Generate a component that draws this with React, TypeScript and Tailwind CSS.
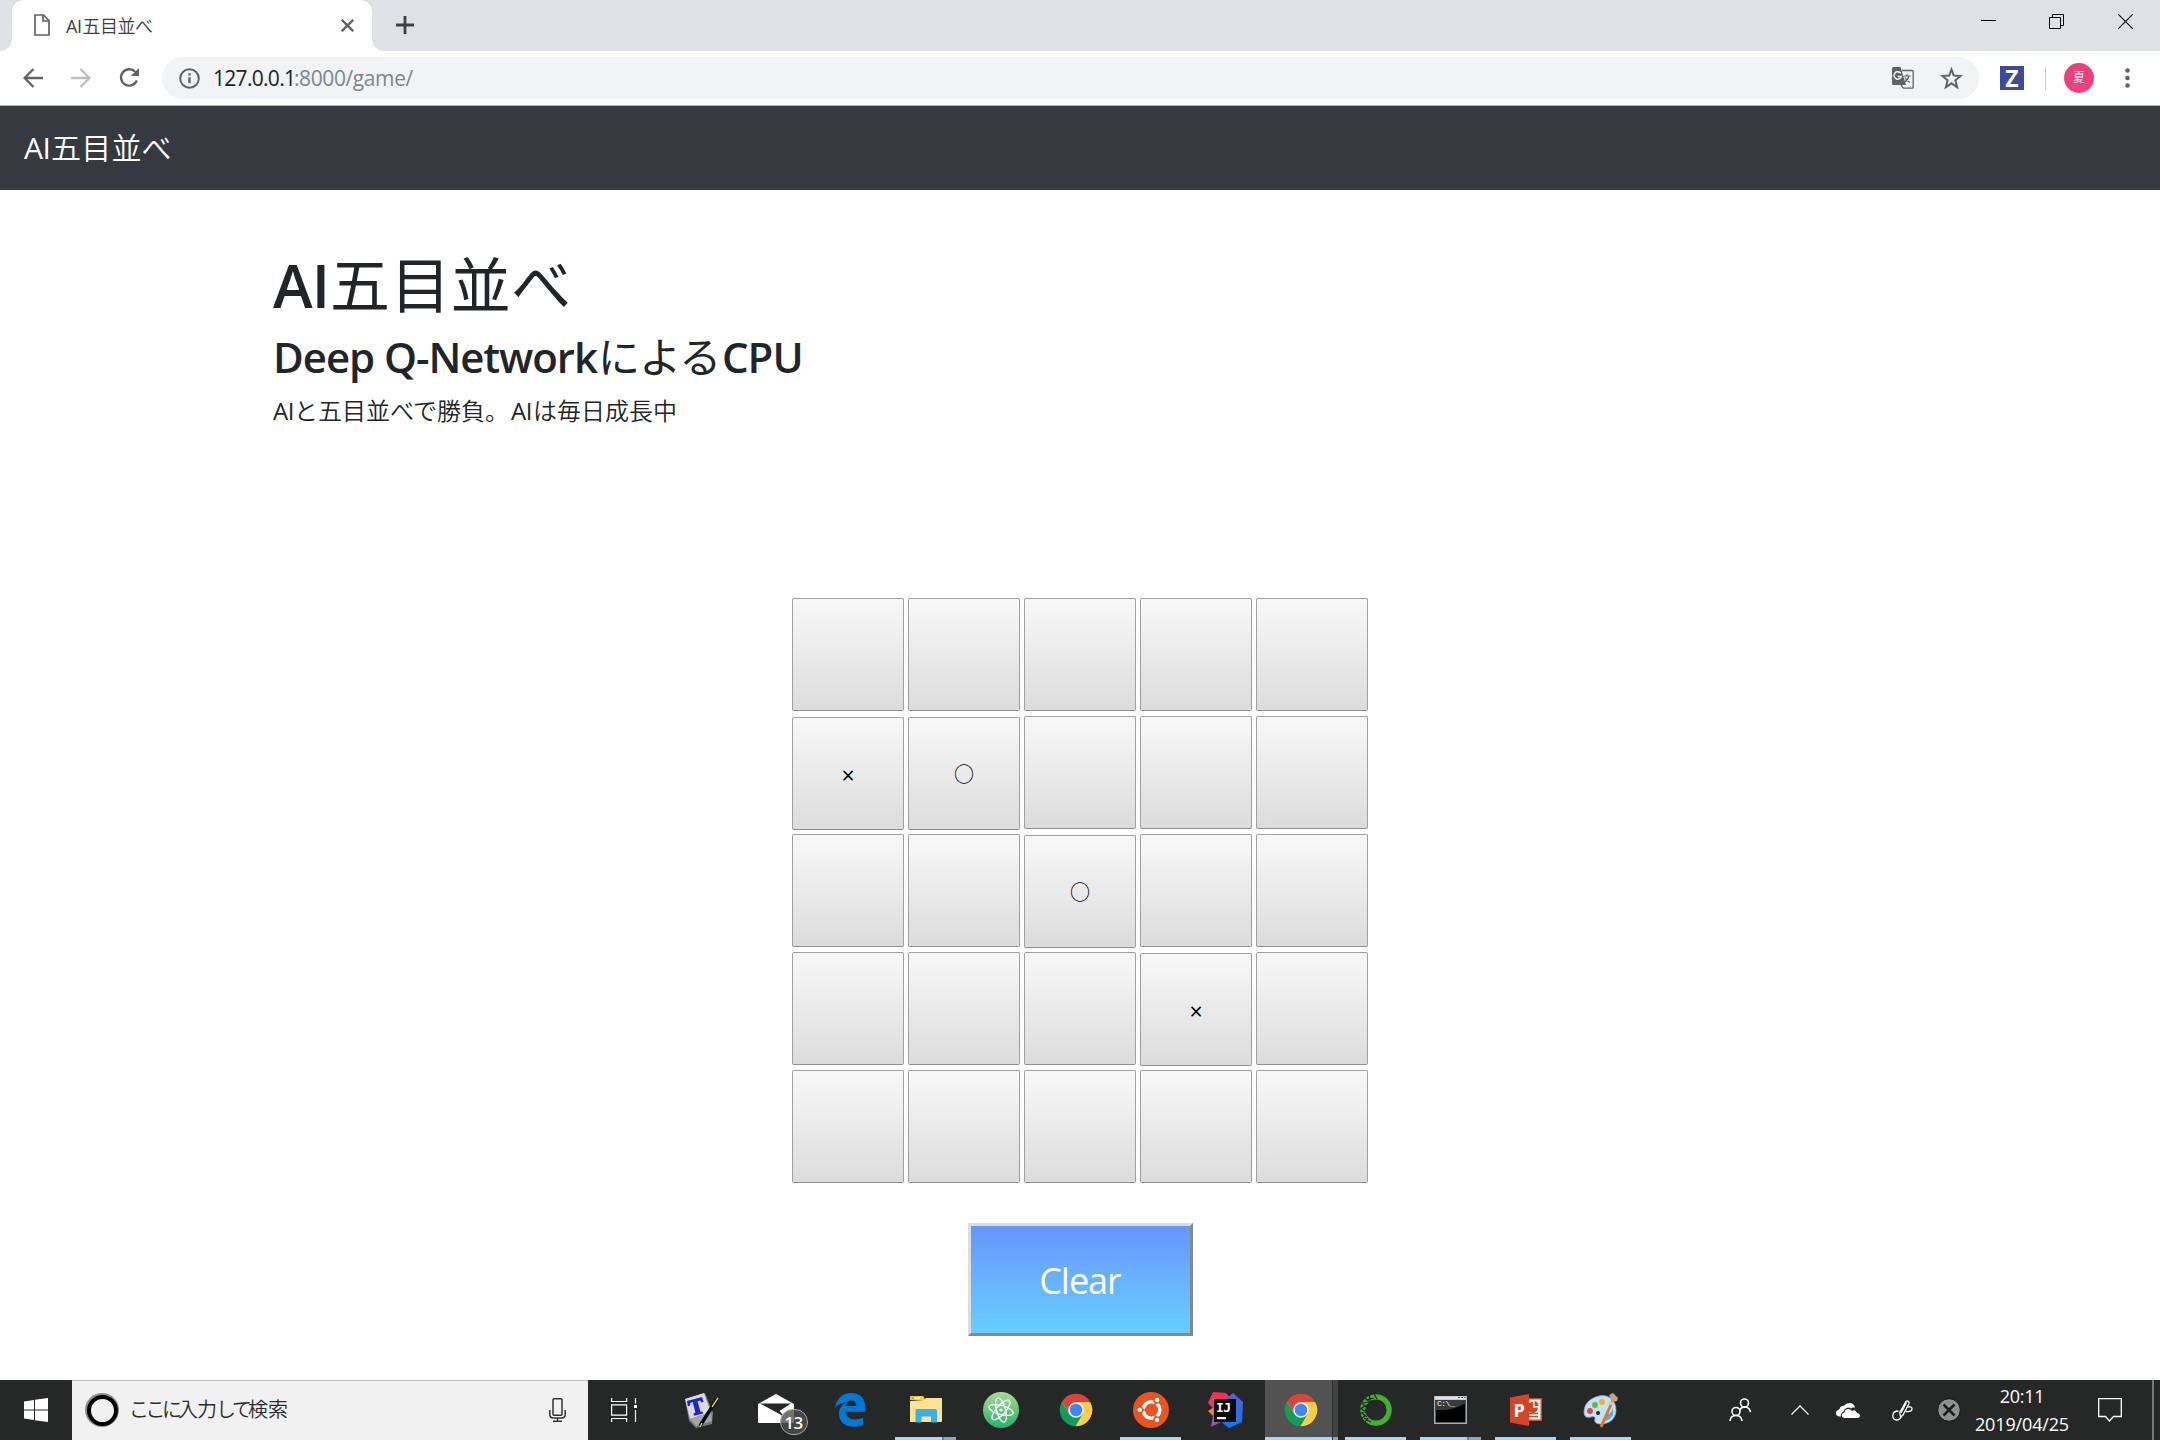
import React from "react";

const ui = "font-['Open_Sans','Noto_Sans_CJK_JP',sans-serif]";

/** A run of text that occupies a fixed advance width. */
function Run({ className, children }: { className: string; children: React.ReactNode }) {
  return <span className={"inline-block shrink-0 whitespace-nowrap " + className}>{children}</span>;
}

function TabStrip() {
  return (
    <div className="flex h-[51px] bg-[#dee1e6]">
      <div className="w-3 bg-white">
        <div className="h-full rounded-br-[12px] bg-[#dee1e6]" />
      </div>
      <div className="flex w-[360px] items-center rounded-t-[12px] bg-white">
        <svg className="ml-[22px] mb-[1px] h-[22px] w-4" viewBox="0 0 16 22" fill="none" stroke="#5f6368" strokeWidth="1.7">
          <path d="M1 1h8.5L15 6.5V21H1zM9 1v6h6" />
        </svg>
        <div className="ml-4 flex h-[26px] items-center text-[18px] leading-[26px] text-[#3c4043]">
          <Run className="w-[16.5px] tracking-[-0.4px]">AI</Run>
          <Run className="font-[350] tracking-[-0.5px] w-[74px]">五目並べ</Run>
        </div>
        <svg className="ml-auto mr-[18px] h-[13px] w-[13px]" viewBox="0 0 13 13" stroke="#5f6368" strokeWidth="2.4">
          <path d="M.8.8l11.4 11.4M12.2.8L.8 12.2" />
        </svg>
      </div>
      <div className="w-3 bg-white">
        <div className="h-full rounded-bl-[12px] bg-[#dee1e6]" />
      </div>
      <svg className="ml-3 mt-4 h-[18px] w-[18px]" viewBox="0 0 18 18" stroke="#3c4043" strokeWidth="2.8">
        <path d="M9 0v18M0 9h18" />
      </svg>
      <div className="ml-auto flex pt-[14px]">
        <svg className="h-[15px] w-[15px]" viewBox="0 0 15 15" stroke="#000" strokeWidth="1">
          <path d="M0 6.5h15" />
        </svg>
        <svg className="ml-[53px] h-[15px] w-[15px]" viewBox="0 0 15 15" fill="none" stroke="#000" strokeWidth="1">
          <path d="M.5 3.5h11v11H.5zM3.5 3.5v-3h11v11h-3" />
        </svg>
        <svg className="ml-[54px] mr-[27px] h-[15px] w-[15px]" viewBox="0 0 15 15" stroke="#000" strokeWidth="1.1">
          <path d="M0 0l15 15M15 0L0 15" />
        </svg>
      </div>
    </div>
  );
}

function Toolbar() {
  return (
    <div className="flex h-[55px] items-center border-b border-[#b3b4b7] bg-white pb-px">
      <svg className="ml-[23px] h-5 w-5" viewBox="0 0 20 20" fill="none" stroke="#5f6368" strokeWidth="2.3">
        <path d="M20 10H2M10.500 1L1.600 10l8.900 9" />
      </svg>
      <svg className="ml-7 h-5 w-5" viewBox="0 0 20 20" fill="none" stroke="#bcbec1" strokeWidth="2.3">
        <path d="M0 10h18M9.500 1l8.900 9-8.900 9" />
      </svg>
      <svg className="ml-7 h-[21px] w-[21px]" viewBox="0 0 22 22" fill="none" stroke="#5f6368" strokeWidth="2.5">
        <path d="M18.700 14.200A8.600 8.600 0 1 1 17 5" />
        <path d="M21 1v8.500h-8.500z" fill="#5f6368" stroke="none" />
      </svg>
      <div className="ml-[22px] mt-px flex h-[42px] w-[1817px] items-center rounded-full bg-[#f1f3f4]">
        <svg className="ml-[17px] h-[21px] w-[21px]" viewBox="0 0 21 21" fill="none" stroke="#5f6368" strokeWidth="2">
          <circle cx="10.500" cy="10.500" r="9.300" />
          <path d="M10.500 9.300v6M10.500 5.200v2.200" strokeWidth="2.400" />
        </svg>
        <div className="ml-[13px] flex text-[21px] leading-[30px]">
          <Run className="w-[81px] tracking-[-0.7px] text-[#202124]">127.0.0.1</Run>
          <Run className="w-[122px] tracking-[-0.4px] text-[#80868b]">:8000/game/</Run>
        </div>
        <svg className="ml-auto h-[22px] w-[22px]" viewBox="0 0 22 22">
          <path d="M10 3.500h10.200q1 0 1 1v15.700q0 1-1 1H11.500L9 18" fill="none" stroke="#5f6368" strokeWidth="1.300" />
          <path d="M1.500 0h7l5.500 18H1.500Q0 18 0 16.500v-15Q0 0 1.500 0z" fill="#5f6368" />
          <path d="M8.700 6.300A3.700 3.700 0 1 0 9.200 9.500H5.800" fill="none" stroke="#fff" strokeWidth="1.500" />
          <path d="M11.500 9h7M15 7v2M17 9q-1 4-5 6.500M13 10.500q1.500 3.500 5 5" fill="none" stroke="#5f6368" strokeWidth="1.200" />
        </svg>
        <svg className="ml-[26px] mr-4 h-[23px] w-[23px]" viewBox="0 0 23 23" fill="none" stroke="#5f6368" strokeWidth="2">
          <path d="M11.500 2.400l2.300 6.100 6.800.5-5.200 4.300 1.700 6.800-5.600-3.800-5.600 3.800 1.700-6.800-5.200-4.300 6.800-.5z" />
        </svg>
      </div>
      <div className="ml-[21px] mt-px flex h-6 w-6 items-center justify-center bg-[#3c4b9b] font-['Noto_Sans',sans-serif] text-[23px] font-bold leading-6 text-white">Z</div>
      <div className="ml-[21px] mt-px h-6 w-px bg-[#cfd1d4]" />
      <div className="ml-[18px] mt-px flex h-[30px] w-[30px] items-center justify-center rounded-full bg-[#ec407a] text-[12px] leading-none text-white">夏</div>
      <svg className="ml-[31px] h-5 w-[5px]" viewBox="0 0 5 20" fill="#5f6368">
        <circle cx="2.500" cy="2.500" r="2.300" />
        <circle cx="2.500" cy="10" r="2.300" />
        <circle cx="2.500" cy="17.500" r="2.300" />
      </svg>
    </div>
  );
}

const board = [
  ["", "", "", "", ""],
  ["×", "○", "", "", ""],
  ["", "", "○", "", ""],
  ["", "", "", "×", ""],
  ["", "", "", "", ""],
];

function Board() {
  return (
    <div className="mx-auto grid w-fit grid-cols-5 gap-x-1 gap-y-[5px]">
      {board.flat().map((mark, i) => (
        <button
          key={i}
          className={
            "flex h-[113px] w-[112px] items-center justify-center rounded-[2px] border border-[#a0a0a0] border-b-[#8f8f8f] bg-linear-to-b from-[#f8f8f8] to-[#dcdcdc] leading-none text-black " +
            (mark ? "mt-px -mb-px" : "")
          }
        >
          {mark === "×" && <span className="mt-[4px] text-[23px]">×</span>}
          {mark === "○" && <span className="mt-[2px] text-[20px]">○</span>}
        </button>
      ))}
    </div>
  );
}

function Page() {
  return (
    <main className="h-[1190px] bg-white text-[#212529]">
      <div className="h-[243px] pl-[273px] pt-[59px]">
        <h1 className="flex h-[72px] text-[60px] leading-[72px]">
          <Run className="w-[57px] font-semibold tracking-[-1px]">AI</Run>
          <Run className="font-normal tracking-[0.4px]">五目並べ</Run>
        </h1>
        <h3 className="mt-[11px] flex h-[50px] text-[42px] leading-[50px]">
          <Run className="w-[325px] font-semibold tracking-[-1.050px]">Deep Q-Network</Run>
          <Run className="w-[124px] tracking-[-0.8px]">による</Run>
          <Run className="font-semibold tracking-[-1px]">CPU</Run>
        </h3>
        <p className="mt-[11px] flex h-9 text-[24px] leading-9">
          <Run className="w-[21px] tracking-[-0.5px]">AI</Run>
          <Run className="w-[217px] font-[350]">と五目並べで勝負。</Run>
          <Run className="w-[22px] tracking-[-0.5px]">AI</Run>
          <Run className="font-[350]">は毎日成長中</Run>
        </p>
      </div>
      <div className="mt-[165px]">
        <Board />
        <button className="mx-auto mt-10 flex h-[113px] w-[225px] items-center justify-center border-[3px] border-t-[#dddddd] border-l-[#dddddd] border-r-[#888888] border-b-[#888888] bg-linear-to-b from-[#6795fd] to-[#67ceff] pt-[2px] text-[36px] text-white tracking-[-1px]">
          Clear
        </button>
      </div>
    </main>
  );
}

function Slot({ children, bar = "" }: { children: React.ReactNode; bar?: "" | "one" | "many" | "active" }) {
  return (
    <div className="flex h-[60px] w-[75px] shrink-0">
      <div className={"flex flex-col " + (bar === "active" ? "w-[67px] ml-[2px] bg-[#515251]" : "w-[75px]")}>
        <div className={"flex h-[57px] items-center justify-center pt-[3px] " + (bar === "active" ? "pl-1" : "")}>{children}</div>
        {bar === "one" && <div className="mx-auto h-[3px] w-[61px] bg-[#a6d5fa]" />}
        {bar === "many" && (
          <div className="mx-auto flex h-[3px] w-[61px]">
            <div className="w-[47px] bg-[#a6d5fa]" />
            <div className="w-[2px] bg-[#66829a]" />
            <div className="w-3 bg-[#84a8c6]" />
          </div>
        )}
        {bar === "active" && <div className="h-[3px] bg-[#a6d5fa]" />}
      </div>
      {bar === "active" && (
        <div className="flex h-full w-[6px] flex-col border-l border-[#303130] bg-[#424443]">
          <div className="mt-auto h-[3px] bg-[#84a8c6]" />
        </div>
      )}
    </div>
  );
}

function Chrome() {
  return (
    <svg className="h-[34px] w-[34px]" viewBox="0 0 48 48">
      <circle cx="24" cy="24" r="22" fill="#f1f1f1" />
      <path d="M24 13H44.200A23 23 0 0 0 4.100 12.500L14.500 29.500z" fill="#db4437" />
      <path d="M33.500 29.500L23.400 47A23 23 0 0 0 44.200 13H24z" fill="#ffcd40" />
      <path d="M14.500 29.500L4.100 12.500A23 23 0 0 0 23.400 47L33.500 29.500z" fill="#0f9d58" />
      <circle cx="24" cy="24" r="11" fill="#f1f1f1" />
      <circle cx="24" cy="24" r="8.800" fill="#4285f4" />
    </svg>
  );
}

function TeraPad() {
  return (
    <svg className="h-9 w-9" viewBox="0 0 36 36">
      <path d="M2 7L22 1l8 20-1 11-16 4L6 29z" fill="#77797b" />
      <path d="M2 7L21 1l7 19L7 27z" fill="#d9dbde" />
      <path d="M7 27l21-7 1 9-16 5z" fill="#a3a5a8" />
      <path d="M4 9l15-4 1.500 5-2 .5-1.500-2-2.500.7 3 10.500 2-.2.500 2-9 2.300-.6-2 2-1.200-2.700-10.500-2.500 1-.3 2.700-2 .5z" fill="#1c22dc" />
      <path d="M35 6l-8 12-5 8-5 8" stroke="#08080a" strokeWidth="3.400" fill="none" />
      <path d="M35 6l-6 9M19 31l-2 4" stroke="#d9cf7c" strokeWidth="1.400" fill="none" />
    </svg>
  );
}

function Mail() {
  return (
    <div className="relative h-9 w-9">
      <svg className="h-9 w-9" viewBox="0 0 36 36">
        <path d="M0 12L18 2l18 10v19H0z" fill="#fff" />
        <path d="M2 11.500h31L21.500 19l4.500 5.500z" fill="#262827" />
      </svg>
      <div className="absolute left-[22px] top-[17px] flex h-[26px] w-[28px] items-center justify-center rounded-full border border-[#a5a6a6] bg-[#4d4f4ecc] text-[17px] font-semibold leading-none tracking-[-0.5px] text-white">13</div>
    </div>
  );
}

function Edge() {
  return (
    <svg className="h-[34px] w-[32px]" viewBox="0 0 32 34">
      <path d="M0 15C2 5 8 0 16 0c9 0 14.500 6 14.500 14.500v4.200H10.800c.3 5 4.500 7.700 9.300 7.700 3.200 0 6-.8 8-2v7.300C25.500 33 22 33.800 18 33.800 9.500 33.800 4 28.300 4 20.800 4 15.500 7 11.500 11.500 9.200 6.500 9.500 2.500 11.800 0 15zM10.900 13h10.400c0-3.500-1.800-5.600-5-5.600-3 0-5 2.600-5.400 5.600z" fill="#0078d7" />
    </svg>
  );
}

function Explorer() {
  return (
    <svg className="h-[28px] w-[32px]" viewBox="0 0 32 28">
      <path d="M0 1q0-1 1-1h12l2 3H0z" fill="#ffc52e" />
      <path d="M0 1q0-1 1-1h12l2 4H0z" fill="#ffc52e" />
      <path d="M2 1.500h8v1.300H2z" fill="#fff" />
      <path d="M2 1.500h2v1.300H2z" fill="#1e9d8b" />
      <path d="M0 5l14-1 2-2h15q1 0 1 1v22q0 1-1 1H0z" fill="#ffe394" />
      <path d="M5.500 14.500q0-1.500 1.500-1.500h18.500q1.500 0 1.500 1.500v12h-6v-6H11.500v6h-6z" fill="#36b1ea" />
    </svg>
  );
}

function Atom() {
  return (
    <svg className="h-9 w-9" viewBox="0 0 36 36" fill="none" stroke="#fff" strokeWidth="1.300">
      <defs>
        <linearGradient id="atom" x1="0" y1="0" x2="0" y2="1">
          <stop offset="0" stopColor="#a7dc91" />
          <stop offset="1" stopColor="#24b26b" />
        </linearGradient>
      </defs>
      <circle cx="18" cy="18" r="18" fill="url(#atom)" stroke="none" />
      <ellipse cx="18" cy="18" rx="12.500" ry="4.500" transform="rotate(15 18 18)" />
      <ellipse cx="18" cy="18" rx="12.500" ry="4.500" transform="rotate(75 18 18)" />
      <ellipse cx="18" cy="18" rx="12.500" ry="4.500" transform="rotate(-48 18 18)" />
      <circle cx="18" cy="18" r="1.600" fill="#fff" stroke="none" />
    </svg>
  );
}

function Ubuntu() {
  return (
    <svg className="h-9 w-9" viewBox="0 0 36 36">
      <circle cx="18" cy="18" r="18" fill="#e95420" />
      <circle cx="18.500" cy="18" r="8.300" fill="none" stroke="#fff" strokeWidth="3.600" />
      <g stroke="#e95420" strokeWidth="1.500">
        <path d="M18.500 18l-13 0M18.500 18l6.500-11M18.500 18l6.500 11" />
        <circle cx="18.500" cy="18" r="5.500" fill="#e95420" />
        <g fill="#fff">
          <circle cx="6.700" cy="18" r="3" />
          <circle cx="24" cy="8" r="3" />
          <circle cx="24" cy="28" r="3" />
        </g>
      </g>
    </svg>
  );
}

function Idea() {
  return (
    <div className="relative h-9 w-[35px]">
      <svg className="h-9 w-[35px]" viewBox="0 0 35 36">
        <defs>
          <linearGradient id="ijb" x1="0" y1="0" x2="0" y2="1">
            <stop offset="0" stopColor="#5a5fd0" />
            <stop offset="1" stopColor="#087cfa" />
          </linearGradient>
          <linearGradient id="ijp" x1="0" y1="0" x2="0" y2="1">
            <stop offset="0" stopColor="#fe2857" />
            <stop offset=".5" stopColor="#e8417c" />
            <stop offset="1" stopColor="#7a5fb0" />
          </linearGradient>
        </defs>
        <path d="M0 19l6-4 2 11-4-3z" fill="#fc801d" />
        <path d="M5 0l13 1 5 6-4 20-16 8 3-18-6-6z" fill="url(#ijp)" />
        <path d="M18 7l7-6 10 9-1 20-13 6-9-7z" fill="url(#ijb)" />
        <path d="M6 7h22v23H6z" fill="#090909" />
        <path d="M9 25h9v2.200H9z" fill="#fff" />
      </svg>
      <span className="absolute left-[8px] top-[9px] font-['DejaVu_Sans_Mono',monospace] text-[13px] font-bold leading-none tracking-[-0.5px] text-white">IJ</span>
    </div>
  );
}

function Anaconda() {
  return (
    <svg className="h-8 w-8" viewBox="0 0 32 32" fill="none">
      <circle cx="16" cy="16" r="13.200" stroke="#43b02a" strokeWidth="5.200" />
      <path d="M14 0L17 5M9 1l2 7M5 4l5 4M14 4L6 6M9 8L2 9M2 9l4 4M7 11l-7 4M1 14l5 5M6 16l-6 4M2 19l5 4M6 21l-5 4M4 24l7 4M8 24l-3 4" stroke="#1d2d1b" strokeWidth="1.200" />
    </svg>
  );
}

function Cmd() {
  return (
    <div className="relative h-[28px] w-[33px]">
      <svg className="h-[28px] w-[33px]" viewBox="0 0 33 28">
        <path d="M0 0h33v28H0z" fill="#a5afb7" />
        <path d="M1 .500h31v3H1z" fill="#dfe4e8" />
        <path d="M24 1.500h2M27 1.500h2M30 1.500h1.500" stroke="#4a607e" />
        <path d="M1.500 4h30v22.500h-30z" fill="#000" />
        <path d="M1.500 4h30v3Q20 15 1.500 14z" fill="#3a3a3a" />
      </svg>
      <span className="absolute left-[3px] top-[4px] font-['Liberation_Mono',monospace] text-[8px] leading-none tracking-[-0.5px] text-white">C:\_</span>
    </div>
  );
}

function PowerPoint() {
  return (
    <div className="relative h-8 w-8">
      <svg className="h-8 w-8" viewBox="0 0 32 32">
        <path d="M17 4h15v23H17z" fill="#d24625" />
        <path d="M17 5.500h13.500v20H17z" fill="#fff" />
        <path d="M23 8v5.500h5A5.500 5.500 0 1 1 23 8z" fill="#d24625" />
        <path d="M24.500 7a5 5 0 0 1 4 5h-4z" fill="#d24625" />
        <path d="M19 19.500h9M19 22.500h9" stroke="#d24625" strokeWidth="1.600" />
        <path d="M0 3.500L19 0v32L0 28.500z" fill="#d24625" />
      </svg>
      <span className="absolute left-[4px] top-[6px] text-[18px] font-bold leading-[20px] text-white">P</span>
    </div>
  );
}

function Paint() {
  return (
    <svg className="h-9 w-9" viewBox="0 0 36 36">
      <path d="M16 4C25 2 33 8 33 18c0 9-7 14-15 14-5 0-7-2-6-5 .5-2-1-3-4-2-4 1-7 0-7-5C1 12 7 6 16 4z" fill="#c5e2f5" stroke="#7fa9c9" strokeWidth=".8" />
      <circle cx="15" cy="21" r="2" fill="#22282c" />
      <circle cx="7" cy="19" r="2.900" fill="#e2473a" />
      <circle cx="12" cy="13" r="2.900" fill="#58b947" />
      <circle cx="19" cy="10" r="3" fill="#f9b21d" />
      <path d="M24 23q5-2 6-8v8q-3 5-8 6z" fill="#5fa8dc" />
      <path d="M30 8L18 35" stroke="#d97b2a" strokeWidth="3" />
      <path d="M26 3l4-2 5 5-1 3-5 1z" fill="#c9a27c" />
      <path d="M27 9l4 2-1 3-4-2z" fill="#c5ccd1" />
    </svg>
  );
}

function Taskbar() {
  return (
    <div className="flex h-[60px] bg-[#262827]">
      <div className="flex w-[72px] items-center justify-center">
        <svg className="h-6 w-6" viewBox="0 0 24 24" fill="#fff">
          <path d="M0 3.500L10 2v9.500H0zM11 1.800L24 0v11.500H11zM0 12.500h10V22L0 20.500zM11 12.500h13V24l-13-1.800z" />
        </svg>
      </div>
      <div className="flex w-[516px] items-center border-t border-[#bcbcbc] bg-[#f1f1f1] pb-px">
        <div className="ml-[13px] flex h-[34px] w-[34px] items-center justify-center rounded-full bg-[#8d8d8d]">
          <div className="h-[31px] w-[31px] rounded-full border-[4px] border-black bg-[#f1f1f1]" />
        </div>
        <div className="ml-[10px] flex text-[20px] leading-[30px] text-[#2b2b2b]">
          <Run className="w-[49px] font-[350] tracking-[-3.500px]">ここに</Run>
          <Run className="w-[38px] font-[350] tracking-[-1px]">入力</Run>
          <Run className="w-[32px] font-[350] tracking-[-3.500px]">して</Run>
          <Run className="font-[350]">検索</Run>
        </div>
        <svg className="ml-auto mr-[22px] h-6 w-[17px]" viewBox="0 0 17 24" fill="none" stroke="#333" strokeWidth="1.500">
          <rect x="4" y=".8" width="9" height="16.500" rx="1" />
          <path d="M.8 12v4.500q0 3.500 3.500 3.500h8.400q3.500 0 3.500-3.500V12M8.500 20v3.200M4 23.200h9" />
        </svg>
      </div>
      <div className="flex h-[60px] w-[75px] items-center">
        <svg className="ml-[22px] h-[24px] w-[28px]" viewBox="0 0 28 24" fill="none" stroke="#fff" strokeWidth="1.200">
          <path d="M1.600 0v3.500h15V0M1.600 6.800h15v10.400h-15zM1.600 24v-3.500h15V24M25.500 0v5.500M25.500 12v12" />
          <path d="M24 7h3v3h-3z" fill="#fff" stroke="none" />
        </svg>
      </div>
      <Slot><TeraPad /></Slot>
      <Slot><Mail /></Slot>
      <Slot><Edge /></Slot>
      <Slot bar="many"><Explorer /></Slot>
      <Slot><Atom /></Slot>
      <Slot><Chrome /></Slot>
      <Slot bar="one"><Ubuntu /></Slot>
      <Slot><Idea /></Slot>
      <Slot bar="active"><Chrome /></Slot>
      <Slot bar="one"><Anaconda /></Slot>
      <Slot bar="many"><Cmd /></Slot>
      <Slot bar="one"><PowerPoint /></Slot>
      <Slot bar="one"><Paint /></Slot>
      <div className="ml-auto flex items-center">
        <svg className="h-6 w-[22px]" viewBox="0 0 22 24" fill="none" stroke="#fff" strokeWidth="1.600">
          <circle cx="15.500" cy="5" r="4" />
          <path d="M10.500 12q2-3 5-3 5 0 6 5" />
          <circle cx="7" cy="13.500" r="4" />
          <path d="M1 23q.5-5.500 6-5.500T13 23" />
        </svg>
        <svg className="ml-[40px] h-[10px] w-[18px]" viewBox="0 0 18 10" fill="none" stroke="#fff" strokeWidth="1.300">
          <path d="M.5 9.500L9 1l8.500 8.500" />
        </svg>
        <svg className="ml-[27px] h-[15px] w-6" viewBox="0 0 24 15" fill="#fff">
          <path d="M3 13.500Q0 13 0 10q0-3 3.300-3.500Q4 2.500 8 2.700 10 0 13.500 0 18 0 19 4.500q-3-.5-4 1-2-1.500-4.500-.5T7.500 8.500Q4.500 9.500 4.800 13.500z" />
          <path d="M8 15q-2.500-.5-2.300-3T8.500 9.500Q9 6 12 6t4 2q3.500-2 5 2 3 .5 3 2.800-.2 2.200-2.500 2.200z" />
        </svg>
        <svg className="ml-[32px] h-[21px] w-[21px]" viewBox="0 0 21 21" fill="none" stroke="#fff" strokeWidth="1.300">
          <path d="M8.500 17L7.700 12.500 14 1.500q1.500-1 2.500 0t.3 2.500L11 15zM14.500 2.500L9 13" />
          <path d="M6.500 11Q1 11 .8 15.500.8 20 4.500 20q3.500 0 5-4M16 7q4-1 4 2t-6 2.500" />
        </svg>
        <svg className="ml-[24px] h-6 w-6" viewBox="0 0 24 24">
          <circle cx="12" cy="12" r="11.300" fill="#8f9090" stroke="#111" />
          <path d="M6.500 6.500l11 11M17.500 6.500l-11 11" stroke="#1b1c1c" strokeWidth="2.500" />
        </svg>
        <div className="ml-[11px] -mt-px flex w-[100px] flex-col items-center text-[18px] leading-[28px] text-white">
          <div className="tracking-[-0.3px]">20:11</div>
          <div className="tracking-[-0.150px]">2019/04/25</div>
        </div>
        <svg className="ml-[26px] h-6 w-6" viewBox="0 0 24 24" fill="none" stroke="#fff" strokeWidth="1.300">
          <path d="M.7.700h22.600v17.800H15.500L11.500 23l-4-4.500H.7z" />
        </svg>
        <div className="ml-[30px] mr-[6px] h-[60px] w-[2px] bg-[#767877]" />
      </div>
    </div>
  );
}

export default function App() {
  return (
    <div className={"flex h-[1440px] w-[2160px] flex-col overflow-hidden bg-white " + ui}>
      <TabStrip />
      <Toolbar />
      <nav className="flex h-[84px] items-center bg-[#343a40] pb-px pl-6 text-[30px] leading-[45px] text-white">
        <Run className="w-[27px] tracking-[-0.5px]">AI</Run>
        <Run className="font-[350] tracking-[0.2px]">五目並べ</Run>
      </nav>
      <Page />
      <Taskbar />
    </div>
  );
}
